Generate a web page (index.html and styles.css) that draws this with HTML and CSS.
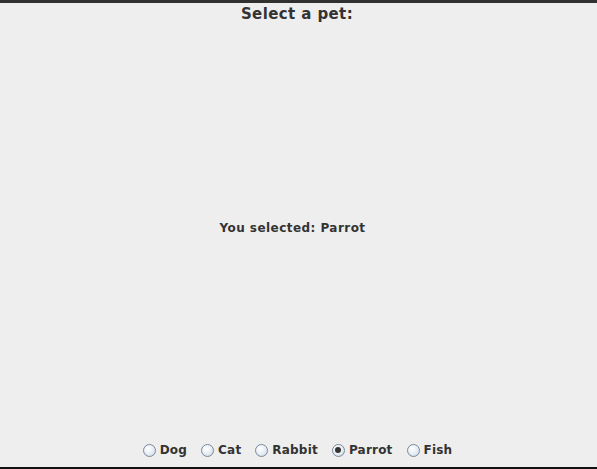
FILE: index.html
```html
<!DOCTYPE html>
<html>
<head>
<meta charset="utf-8">
<link rel="stylesheet" href="styles.css">
</head>
<body>
<div class="topbar"></div>
<div class="window">
  <div class="title">Select a pet:</div>
  <div class="result">You selected: Parrot</div>
  <div class="radios">
    <label class="radio"><span class="dot"></span>Dog</label>
    <label class="radio"><span class="dot"></span>Cat</label>
    <label class="radio"><span class="dot"></span>Rabbit</label>
    <label class="radio"><span class="dot on"></span>Parrot</label>
    <label class="radio"><span class="dot"></span>Fish</label>
  </div>
</div>
<div class="bottombar"></div>
</body>
</html>
```
FILE: styles.css
```css
html, body {
  margin: 0;
  padding: 0;
  width: 597px;
  height: 469px;
  overflow: hidden;
  background: #eeeeee;
  font-family: "DejaVu Sans", sans-serif;
  color: #333333;
}
.topbar {
  height: 3px;
  background: #303030;
}
.window {
  height: 464px;
  display: flex;
  flex-direction: column;
  align-items: center;
}
.title {
  font-weight: bold;
  font-size: 15px;
  line-height: 18px;
  letter-spacing: 0.4px;
  margin-top: 2px;
  height: 19px;
  padding-right: 3px;
}
.result {
  flex: 1;
  display: flex;
  align-items: center;
  font-weight: bold;
  font-size: 12px;
  line-height: 16px;
  letter-spacing: 0.45px;
  padding-right: 12px;
}
.radios {
  display: flex;
  align-items: flex-start;
  gap: 14px;
  height: 35px;
  padding-top: 9px;
  box-sizing: border-box;
  padding-right: 2px;
}
.radio {
  display: flex;
  align-items: center;
  gap: 4px;
  font-weight: bold;
  font-size: 12px;
  line-height: 18px;
  letter-spacing: 0.2px;
}
.dot {
  width: 11px;
  height: 11px;
  border-radius: 50%;
  border: 1px solid #7a8a99;
  background: radial-gradient(circle at 40% 35%, #ffffff 0%, #e8eef4 50%, #c4d2e0 100%);
  position: relative;
}
.dot.on::after {
  content: "";
  position: absolute;
  left: 2.5px;
  top: 2.5px;
  width: 6px;
  height: 6px;
  border-radius: 50%;
  background: #333333;
}
.bottombar {
  height: 2px;
  background: #111111;
}
```
